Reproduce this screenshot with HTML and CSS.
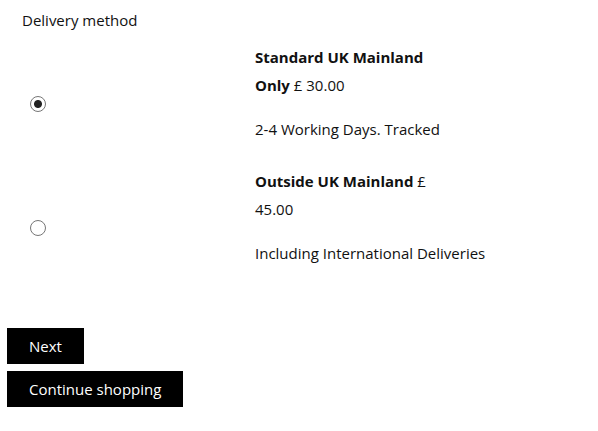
FILE: index.html
```html
<!DOCTYPE html>
<html lang="en">
<head>
  <meta charset="UTF-8">
  <title>Delivery method</title>
  <link rel="stylesheet" href="styles.css">
</head>
<body>

<form class="delivery">
  <h2>Delivery method</h2>

  <label class="option">
    <span class="choice"><input type="radio" name="delivery" value="uk" checked></span>
    <span class="details">
      <span class="title"><strong>Standard UK Mainland Only</strong> £ 30.00</span>
      <span class="desc">2-4 Working Days. Tracked</span>
    </span>
  </label>

  <label class="option">
    <span class="choice"><input type="radio" name="delivery" value="intl"></span>
    <span class="details">
      <span class="title"><strong>Outside UK Mainland</strong> £ 45.00</span>
      <span class="desc">Including International Deliveries</span>
    </span>
  </label>

  <div class="actions">
    <button type="button">Next</button>
    <button type="button">Continue shopping</button>
  </div>
</form>

</body>
</html>
```

FILE: styles.css
```css
body {
  margin: 0;
  font-family: 'Open Sans', sans-serif;
  font-size: 15px;
  color: #111;
  background-color: #fff;
}

.delivery {
  padding: 6px 7px;
}

h2 {
  margin: 0 0 9px 15px;
  font-size: 15px;
  font-weight: normal;
  line-height: 28px;
}

.option {
  display: flex;
  align-items: center;
  margin-bottom: 2px;
}

.choice {
  width: 248px;
  padding-left: 23px;
  box-sizing: border-box;
  display: flex;
}

.choice input {
  appearance: none;
  margin: 0;
  width: 16px;
  height: 16px;
  border: 1px solid #767676;
  border-radius: 50%;
  background-color: #fff;
}

.choice input:checked {
  background: radial-gradient(circle, #222 0, #222 3.5px, #fff 4.5px);
}

.details {
  display: flex;
  flex-direction: column;
  line-height: 28px;
}

.title {
  width: 190px;
}

.desc {
  margin: 16px 0 22px;
}

.actions {
  margin-top: 39px;
  display: flex;
  flex-direction: column;
  align-items: flex-start;
  gap: 7px;
}

button {
  background-color: #000;
  color: #fff;
  border: none;
  font-family: 'Open Sans', sans-serif;
  font-size: 15px;
  height: 36px;
  padding: 0 22px;
  cursor: pointer;
}
```
